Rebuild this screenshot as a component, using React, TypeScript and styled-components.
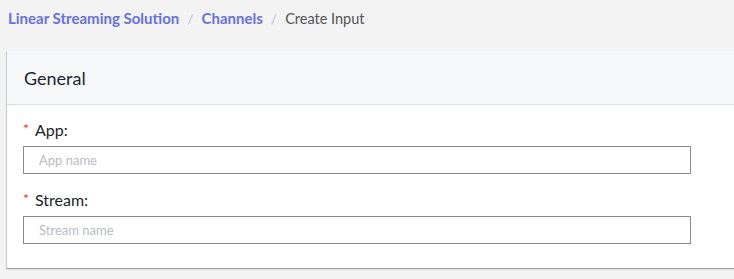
import React from "react";
import styled, { createGlobalStyle } from "styled-components";

const Global = createGlobalStyle`
  html, body { margin: 0; padding: 0; background: #f3f3f3; }
  body { font-family: "Lato", "Noto Sans", sans-serif; }
  * { box-sizing: border-box; }
`;

const Page = styled.div`
  width: 734px;
  height: 279px;
  overflow: hidden;
  background: #f3f3f3;
  display: flex;
  flex-direction: column;
`;

const Breadcrumbs = styled.nav`
  display: flex;
  align-items: center;
  height: 36px;
  padding: 0 0 0 8px;
  font-size: 15px;
  gap: 8px;
`;

const Crumb = styled.a<{ $current?: boolean }>`
  color: ${(p) => (p.$current ? "#545454" : "#6672dd")};
  font-weight: ${(p) => (p.$current ? 400 : 700)};
  font-size: ${(p) => (p.$current ? "14.5px" : "15px")};
  text-decoration: none;
`;

const Sep = styled.span`
  color: #c2c5c9;
  font-size: 14px;
`;

const Card = styled.section`
  margin: 15px -10px 0 6px;
  background: #fff;
  border-left: 1px solid #c9cccc;
  border-bottom: 1px solid #9aa0a1;
  box-shadow: 0 1px 1px rgba(0, 0, 0, 0.08);
`;

const CardHeader = styled.header`
  height: 54px;
  background: #f7f8fa;
  border-bottom: 1px solid #d8dde6;
  display: flex;
  align-items: center;
  padding-left: 17px;
  font-size: 18px;
  color: #1b2433;
`;

const CardBody = styled.div`
  padding: 14px 0 24px 16px;
  display: flex;
  flex-direction: column;
  gap: 15px;
`;

const Field = styled.div`
  display: flex;
  flex-direction: column;
  gap: 6px;
`;

const Label = styled.label`
  display: flex;
  align-items: center;
  font-size: 16px;
  color: #1b1f24;
  height: 21px;
`;

const Req = styled.span`
  color: #e0354a;
  font-size: 14px;
  margin-right: 6px;
  position: relative;
  top: -1px;
`;

const Input = styled.input`
  width: 668px;
  height: 28px;
  border: 1px solid #8a8a8a;
  border-radius: 0;
  padding: 0 15px;
  font-family: inherit;
  font-size: 13px;
  color: #333;
  background: #fff;
  outline: none;
  &::placeholder { color: #b8bcc4; }
`;

export default function App() {
  return (
    <>
      <Global />
      <Page>
        <Breadcrumbs>
          <Crumb href="#">Linear Streaming Solution</Crumb>
          <Sep>/</Sep>
          <Crumb href="#">Channels</Crumb>
          <Sep>/</Sep>
          <Crumb $current>Create Input</Crumb>
        </Breadcrumbs>
        <Card>
          <CardHeader>General</CardHeader>
          <CardBody>
            <Field>
              <Label>
                <Req>*</Req>App:
              </Label>
              <Input placeholder="App name" />
            </Field>
            <Field>
              <Label>
                <Req>*</Req>Stream:
              </Label>
              <Input placeholder="Stream name" />
            </Field>
          </CardBody>
        </Card>
      </Page>
    </>
  );
}
